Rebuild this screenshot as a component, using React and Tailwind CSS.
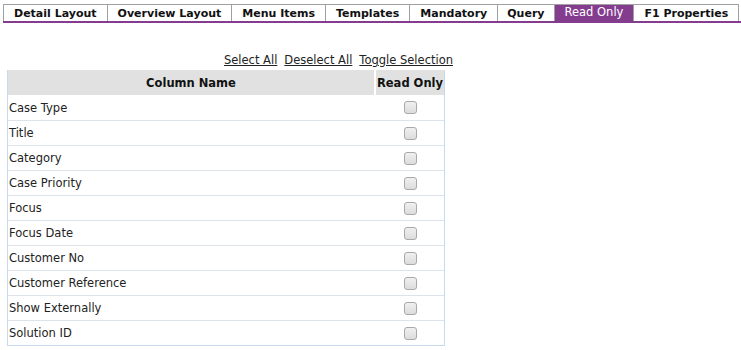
import React from "react";

const tabs = ["Detail Layout", "Overview Layout", "Menu Items", "Templates", "Mandatory", "Query", "Read Only", "F1 Properties"];
const rows = ["Case Type", "Title", "Category", "Case Priority", "Focus", "Focus Date", "Customer No", "Customer Reference", "Show Externally", "Solution ID"];

function Box() {
  return (
    <span className="inline-block w-[13px] h-[13px] rounded-[3px] border border-[#a9a9a9] bg-gradient-to-b from-[#f0f0f0] to-[#dcdcdc] align-middle" />
  );
}

export default function App() {
  return (
    <div className="w-[741px] h-[350px] bg-white text-[#222] overflow-hidden" style={{ fontFamily: '"DejaVu Sans", Verdana, sans-serif' }}>
      <div className="pt-[4px] pl-[3px]">
        <div className="flex border-b-2 border-[#843c8f]">
          {tabs.map((t, i) => (
            <div
              key={t}
              className={
                "h-[17px] shrink-0 whitespace-nowrap flex items-center leading-none border-t border-r border-[#a0a0a0] " +
                (i === 0 ? "border-l " : "") +
                (t === "Read Only" ? "px-[10px] bg-[#843c8f] text-white text-[11.5px] font-normal border-[#843c8f] pb-[1px]" : t === "Query" ? "px-[9px] bg-white text-[#111] text-[11px] font-bold" : "px-[10px] bg-white text-[#111] text-[11px] font-bold")
              }
            >
              {t}
            </div>
          ))}
        </div>
      </div>
      <div className="w-[453px] flex justify-end gap-[7px] mt-[30px] text-[11.5px] leading-[14px] text-[#222]">
        <span className="underline">Select All</span>
        <span className="underline">Deselect All</span>
        <span className="underline">Toggle Selection</span>
      </div>
      <div className="ml-[7px] mt-[3px] w-[438px] border-l border-r border-b border-[#c6d9ee]">
        <div className="flex h-[25px] bg-[#e1e1e1] text-[11.5px] font-bold text-[#111]">
          <div className="w-[368px] flex items-center justify-center border-r-2 border-white pt-[2px]">Column Name</div>
          <div className="flex-1 flex items-center justify-center pt-[2px]">Read Only</div>
        </div>
        {rows.map((r, i) => (
          <div key={r} className={"flex h-[25px] text-[11.5px] text-[#222] " + (i > 0 ? "border-t border-[#dde3ea]" : "")}>
            <div className="w-[368px] flex items-center pl-[1px] pt-[2px]">{r}</div>
            <div className="flex-1 flex items-center justify-center">
              <Box />
            </div>
          </div>
        ))}
      </div>
    </div>
  );
}
